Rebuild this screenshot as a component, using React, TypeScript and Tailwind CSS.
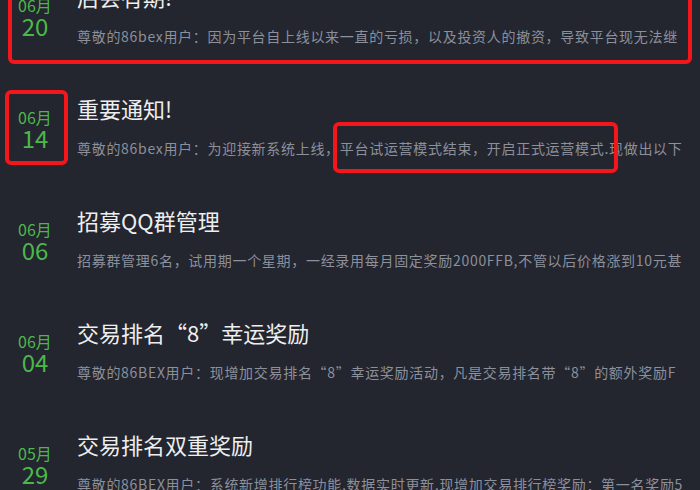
const notices = [
  {
    month: '06月',
    day: '20',
    title: '后会有期!',
    desc: '尊敬的86bex用户：因为平台自上线以来一直的亏损，以及投资人的撤资，导致平台现无法继续运营下去',
  },
  {
    month: '06月',
    day: '14',
    title: '重要通知!',
    desc: '尊敬的86bex用户：为迎接新系统上线，平台试运营模式结束，开启正式运营模式.现做出以下调整',
  },
  {
    month: '06月',
    day: '06',
    title: '招募QQ群管理',
    desc: '招募群管理6名，试用期一个星期，一经录用每月固定奖励2000FFB,不管以后价格涨到10元甚至更高',
  },
  {
    month: '06月',
    day: '04',
    title: '交易排名“8”幸运奖励',
    desc: '尊敬的86BEX用户：现增加交易排名“8”幸运奖励活动，凡是交易排名带“8”的额外奖励FFB',
  },
  {
    month: '05月',
    day: '29',
    title: '交易排名双重奖励',
    desc: '尊敬的86BEX用户：系统新增排行榜功能,数据实时更新,现增加交易排行榜奖励：第一名奖励5000FFB',
  },
];

function NoticeItem({ month, day, title, desc }: (typeof notices)[number]) {
  return (
    <div className="flex items-start pt-[26px] pb-[21px]">
      {/* 日期 */}
      <div className="w-[77px] shrink-0 flex flex-col items-center pt-[14px] pr-[7px] text-[#4cb84a]">
        <div className="text-[16px] leading-[20px]">{month}</div>
        <div className="text-[24px] leading-[24px] mt-[-1px]">{day}</div>
      </div>
      {/* 标题 + 摘要（摘要只显示一行） */}
      <div className="w-[607px]">
        <div className="text-[22px] leading-[30px] text-[#eeeeee] whitespace-nowrap">{title}</div>
        <div className="mt-[15px] h-[20px] overflow-hidden break-all text-[14px] leading-[20px] tracking-[0.7px] text-[#8c909b]">
          {desc}
        </div>
      </div>
    </div>
  );
}

export default function App() {
  return (
    <div
      className="relative w-[700px] h-[490px] overflow-hidden bg-[#23252f]"
      style={{ fontFamily: '"Noto Sans CJK SC", "Noto Sans", sans-serif' }}
    >
      <div className="mt-[-45px]">
        {notices.map((n) => (
          <NoticeItem key={n.day + n.title} {...n} />
        ))}
      </div>

      {/* 红色标注框 */}
      <div className="absolute left-[8px] top-[-20px] w-[684px] h-[84px] border-4 border-[#f5161b] rounded-[6px]" />
      <div className="absolute left-[5px] top-[90px] w-[63px] h-[75px] border-4 border-[#f5161b] rounded-[6px]" />
      <div className="absolute left-[333px] top-[122px] w-[285px] h-[51px] border-4 border-[#f5161b] rounded-[6px]" />
    </div>
  );
}
